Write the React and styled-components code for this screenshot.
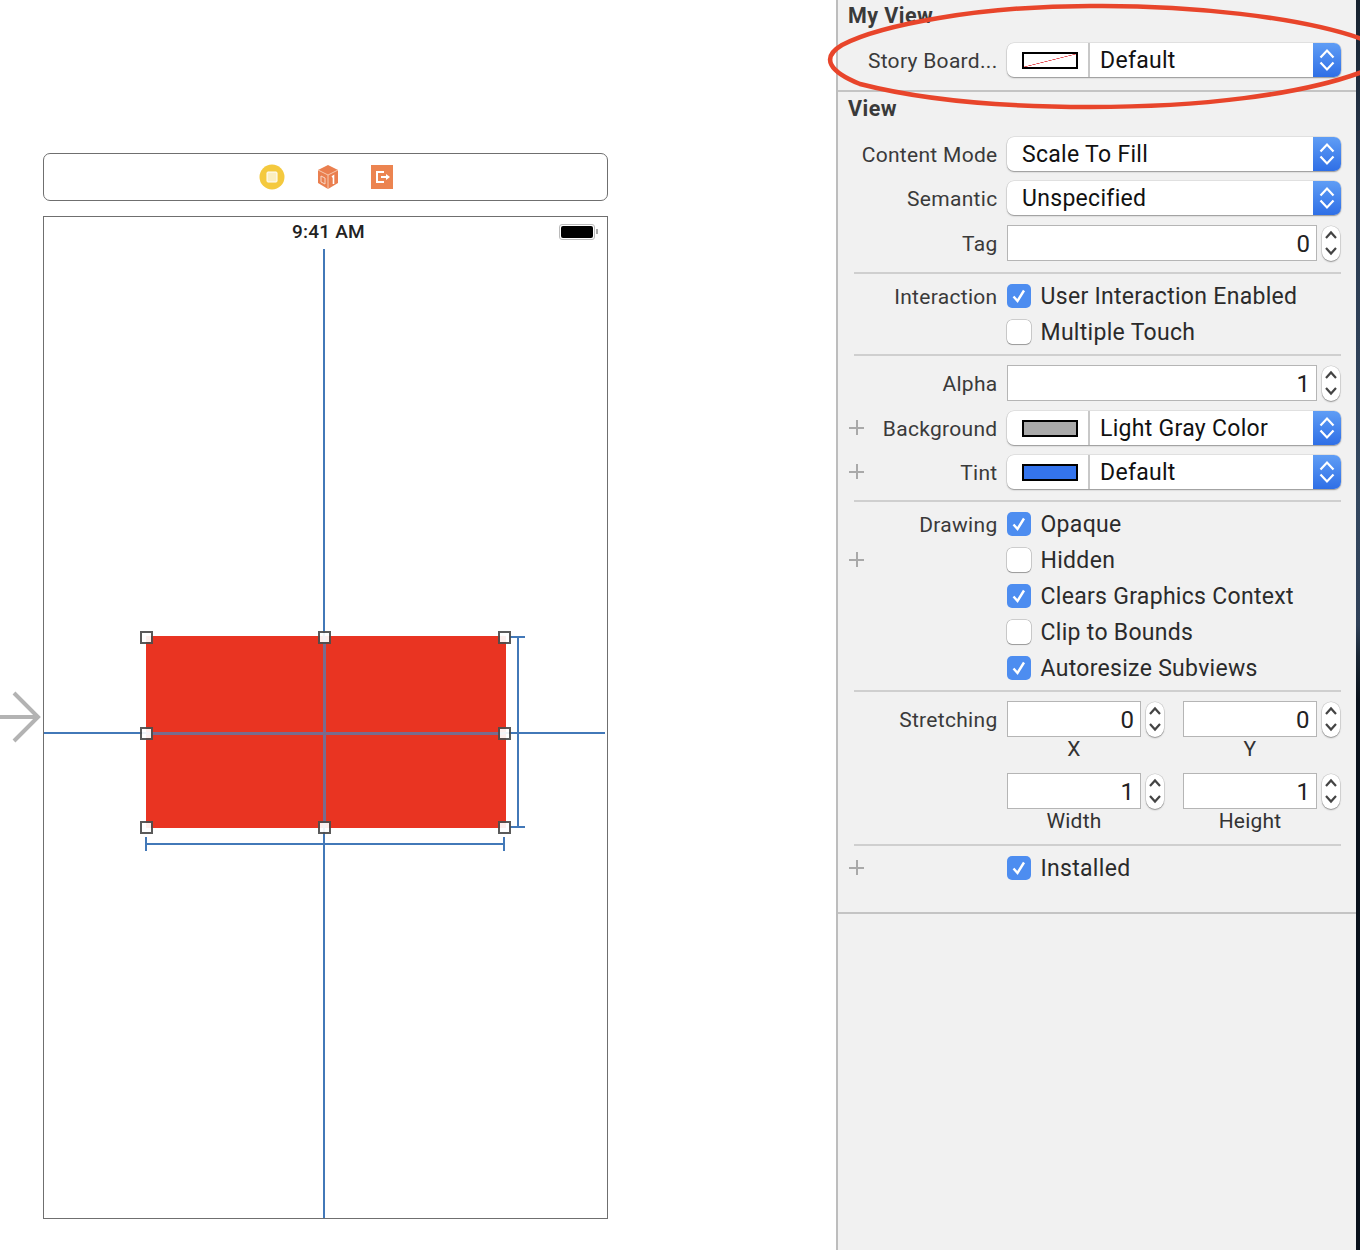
import React from "react";
import styled, { createGlobalStyle } from "styled-components";

const GlobalStyle = createGlobalStyle`
  html, body { margin: 0; padding: 0; background: #fff; }
  body { font-family: Roboto, "Liberation Sans", sans-serif; }
`;

const Page = styled.div`
  position: relative;
  width: 1360px;
  height: 1250px;
  display: flex;
  overflow: hidden;
  background: #fff;
`;

/* ---------- storyboard side ---------- */

const Canvas = styled.div`
  position: relative;
  width: 836px;
  flex: none;
  box-sizing: border-box;
  padding: 153px 228px 0 43px;
  display: flex;
  flex-direction: column;
  gap: 15px;
`;

const SceneDock = styled.div`
  height: 48px;
  box-sizing: border-box;
  border: 1.5px solid #6f6f6f;
  border-radius: 7px;
  display: flex;
  align-items: center;
  justify-content: center;
  gap: 32px;
`;

const Device = styled.div`
  position: relative;
  height: 1003px;
  box-sizing: border-box;
  border: 1.5px solid #6f6f6f;
`;

const Clock = styled.div`
  position: absolute;
  top: 4px;
  left: 248px;
  font-size: 19px;
  line-height: 22px;
  font-weight: 500;
  letter-spacing: 0.2px;
  color: #222;
`;

const Battery = styled.div`
  position: absolute;
  top: 7px;
  left: 515px;
  width: 36px;
  height: 16px;
  box-sizing: border-box;
  border: 1.5px solid #bbb;
  border-radius: 3px;
  padding: 1px;
  &::before {
    content: "";
    display: block;
    height: 100%;
    background: #000;
    border-radius: 2px;
  }
  &::after {
    content: "";
    position: absolute;
    right: -4px;
    top: 4px;
    width: 2px;
    height: 5px;
    background: #aaa;
  }
`;

const RedView = styled.div`
  position: absolute;
  left: 102px;
  top: 419px;
  width: 360px;
  height: 192px;
  background: #e93422;
`;

const Guide = styled.div`
  position: absolute;
  background: ${(p) => p.$color || "#4278b8"};
`;

const Handle = styled.div`
  position: absolute;
  width: 13px;
  height: 13px;
  box-sizing: border-box;
  border: 2px solid #4d4d4d;
  background: #fff;
  opacity: 0.92;
`;

const EntryArrow = styled.svg`
  position: absolute;
  left: 0;
  top: 690px;
`;

/* ---------- inspector ---------- */

const Inspector = styled.div`
  width: 520px;
  flex: none;
  box-sizing: border-box;
  background: #f1f1f1;
  border-left: 2.5px solid #bdbdbd;
`;

const Content = styled.div`
  height: 914px;
  box-sizing: border-box;
  border-bottom: 2px solid #c4c4c4;
`;

const SectionTitle = styled.div`
  height: ${(p) => p.$h}px;
  padding: ${(p) => p.$pt}px 0 0 10px;
  box-sizing: border-box;
  font-size: 21.5px;
  line-height: 24px;
  font-weight: 700;
  letter-spacing: 0.45px;
  color: #3a3a3a;
`;

const Section = styled.div`
  height: ${(p) => p.$h}px;
  box-sizing: border-box;
  padding-top: ${(p) => p.$pt || 0}px;
  border-bottom: ${(p) => (p.$full ? "2px solid #c4c4c4" : "none")};
`;

const Divider = styled.div`
  height: 2px;
  margin: ${(p) => p.$mt || 0}px 15px 0 16px;
  background: #cfcfcf;
`;

const Row = styled.div`
  display: flex;
  align-items: center;
  height: ${(p) => p.$h || 36}px;
  margin-top: ${(p) => p.$mt || 0}px;
  position: relative;
`;

const Plus = styled.span`
  position: absolute;
  left: 11px;
  top: 50%;
  margin-top: -8px;
  width: 15px;
  height: 15px;
  background:
    linear-gradient(#a9a9a9, #a9a9a9) center / 15px 2px no-repeat,
    linear-gradient(#a9a9a9, #a9a9a9) center / 2px 15px no-repeat;
`;

const Label = styled.div`
  width: 159.5px;
  flex: none;
  box-sizing: border-box;
  padding-top: 2px;
  text-align: right;
  font-size: 21px;
  letter-spacing: 0.3px;
  color: #3a3a3a;
  white-space: nowrap;
`;

const Controls = styled.div`
  margin-left: 9.5px;
  display: flex;
  align-items: center;
  gap: 5px;
`;

const PopUp = styled.div`
  width: 333.5px;
  height: 34px;
  box-sizing: border-box;
  background: #fff;
  border-radius: 7px;
  box-shadow: 0 1px 1.5px rgba(0, 0, 0, 0.35), 0 0 0 0.5px rgba(0, 0, 0, 0.12);
  display: flex;
  overflow: hidden;
`;

const WellCell = styled.div`
  width: 83px;
  flex: none;
  box-sizing: border-box;
  padding-left: 4px;
  border-right: 2px solid #c8c8c8;
  display: flex;
  align-items: center;
  justify-content: center;
`;

const Swatch = styled.div`
  width: 56px;
  height: 17px;
  box-sizing: border-box;
  border: 2px solid #000;
  background: ${(p) => p.$color};
`;

const PopText = styled.div`
  flex: 1;
  padding-left: ${(p) => p.$pl}px;
  font-size: 23px;
  line-height: 36px;
  letter-spacing: 0.3px;
  color: #111;
  white-space: nowrap;
`;

const PopArrows = styled.div`
  width: 28px;
  flex: none;
  background: linear-gradient(#5f9df5, #2f6fe6);
  display: flex;
  align-items: center;
  justify-content: center;
`;

const NumberField = styled.div`
  width: ${(p) => p.$w}px;
  height: 36px;
  box-sizing: border-box;
  background: #fff;
  border: 1.5px solid #b5b5b5;
  text-align: right;
  padding-right: 6px;
  font-size: 24px;
  line-height: 37px;
  color: #222;
`;

const StepperBox = styled.div`
  width: 18px;
  height: 35px;
  flex: none;
  background: #fff;
  border-radius: 9px;
  box-shadow: 0 1px 1.5px rgba(0, 0, 0, 0.35), 0 0 0 0.5px rgba(0, 0, 0, 0.15);
  display: flex;
  align-items: center;
  justify-content: center;
`;

const CheckRow = styled.div`
  display: flex;
  align-items: center;
  gap: 10px;
  margin-left: -0.5px;
  font-size: 23px;
  letter-spacing: 0.3px;
  color: #2b2b2b;
  white-space: nowrap;
`;

const Box = styled.div`
  width: 24px;
  height: 24px;
  flex: none;
  box-sizing: border-box;
  border-radius: 5px;
  background: ${(p) => (p.$on ? "#4d8df0" : "#fff")};
  box-shadow: ${(p) =>
    p.$on ? "none" : "0 0 0 0.5px rgba(0,0,0,0.3), 0 1px 1px rgba(0,0,0,0.25)"};
  display: flex;
  align-items: center;
  justify-content: center;
`;

const PairGrid = styled.div`
  margin-left: 169px;
  margin-top: ${(p) => p.$mt || 0}px;
  display: grid;
  grid-template-columns: 158px 158px;
  column-gap: 18px;
`;

const FieldCaption = styled.div`
  width: 134px;
  text-align: center;
  font-size: 21px;
  line-height: 24px;
  letter-spacing: 0.2px;
  color: #333;
`;

const Pair = styled.div`
  display: flex;
  align-items: center;
  gap: 5px;
  margin-left: ${(p) => p.$ml || 0}px;
`;

const Annotation = styled.svg`
  position: absolute;
  left: 0;
  top: 0;
  pointer-events: none;
`;

const EdgeStrip = styled.div`
  width: 4px;
  flex: none;
  background: linear-gradient(
    #17222f 0%,
    #2a3a50 15%,
    #33475f 40%,
    #2f4058 50%,
    #1a2735 52.5%,
    #0a121c 56%,
    #0a121c 100%
  );
`;

const PopChevrons = () => (
  <svg width="16" height="26" viewBox="0 0 16 26" fill="none" stroke="#fff" strokeWidth="2.2">
    <path d="M1.5 10.5 L8 3.5 L14.5 10.5" />
    <path d="M1.5 15.5 L8 22.5 L14.5 15.5" />
  </svg>
);

const StepChevrons = () => (
  <svg width="12" height="30" viewBox="0 0 12 30" fill="none" stroke="#444" strokeWidth="2.2">
    <path d="M1 10 L6 4.5 L11 10" />
    <path d="M1 20 L6 25.5 L11 20" />
  </svg>
);

const Check = () => (
  <svg width="16" height="16" viewBox="0 0 16 16" fill="none" stroke="#fff" strokeWidth="2.4">
    <path d="M2.5 8.5 L6.5 13 L13 2.5" />
  </svg>
);

const Select = ({ swatch, children }) => (
  <PopUp>
    {swatch && <WellCell>{swatch}</WellCell>}
    <PopText $pl={swatch ? 10 : 15}>{children}</PopText>
    <PopArrows>
      <PopChevrons />
    </PopArrows>
  </PopUp>
);

const Stepper = () => (
  <StepperBox>
    <StepChevrons />
  </StepperBox>
);

const Checkbox = ({ on, children }) => (
  <CheckRow>
    <Box $on={on}>{on && <Check />}</Box>
    <span>{children}</span>
  </CheckRow>
);

const handles = [
  [146, 637], [324, 637], [504, 637],
  [146, 733], [504, 733],
  [146, 827], [324, 827], [504, 827],
];

export default function App() {
  return (
    <Page>
      <GlobalStyle />
      <Canvas>
        <SceneDock>
          <svg width="26" height="26" viewBox="0 0 26 26">
            <circle cx="13" cy="13" r="12.5" fill="#f4c93e" />
            <rect x="8" y="8" width="10" height="10" rx="1" fill="#fbeec0" stroke="#fff" />
          </svg>
          <svg width="22" height="26" viewBox="0 0 22 26">
            <path d="M11 1 L21 6 V19 L11 25 L1 19 V6 Z" fill="#ea7f4f" />
            <path d="M1 6 L11 11 L21 6 M11 11 V25" stroke="#f7c9ae" strokeWidth="1" fill="none" />
            <path d="M4 12 L8 14 V20 L4 18 Z" fill="none" stroke="#f7d9c8" />
            <path d="M15 13 L16.5 12 V20" fill="none" stroke="#fff" strokeWidth="1.6" />
          </svg>
          <svg width="22" height="24" viewBox="0 0 22 24">
            <rect width="22" height="24" fill="#ec8450" />
            <path d="M13 7 H6 V17 H13" fill="none" stroke="#fff" strokeWidth="2" />
            <path d="M10 12 H16" stroke="#fff" strokeWidth="2" />
            <path d="M15 9 L19 12 L15 15 Z" fill="#fff" />
          </svg>
        </SceneDock>
        <Device>
          <Clock>9:41 AM</Clock>
          <Battery />
          <RedView />
          <Guide style={{ left: 279, top: 32, width: 2, height: 969 }} />
          <Guide style={{ left: 0, top: 515, width: 561, height: 2 }} />
          <Guide $color="#7a6b8e" style={{ left: 102, top: 514.5, width: 358, height: 3 }} />
          <Guide $color="#7a6b8e" style={{ left: 278.5, top: 420, width: 3, height: 190 }} />
          <Guide style={{ left: 473, top: 420, width: 2, height: 190 }} />
          <Guide style={{ left: 466, top: 419, width: 15, height: 2 }} />
          <Guide style={{ left: 466, top: 609, width: 15, height: 2 }} />
          <Guide style={{ left: 102, top: 626, width: 358, height: 2 }} />
          <Guide style={{ left: 101, top: 620, width: 2, height: 14 }} />
          <Guide style={{ left: 459, top: 620, width: 2, height: 14 }} />
        </Device>
        {handles.map(([x, y]) => (
          <Handle key={`${x}-${y}`} style={{ left: x - 6.5, top: y - 6.5 }} />
        ))}
        <EntryArrow width="42" height="54" viewBox="0 0 42 54" fill="none" stroke="#b3b3b3" strokeWidth="4">
          <path d="M0 27 H38" />
          <path d="M14 3 L38 27 L14 51" />
        </EntryArrow>
      </Canvas>

      <Inspector>
        <Content>
          <SectionTitle $h={30} $pt={4}>My View</SectionTitle>
          <Section $h={62} $full $pt={13}>
            <Row $h={34}>
              <Label>Story Board...</Label>
              <Controls>
                <Select swatch={<Swatch $color="linear-gradient(to bottom right, #fff 48%, #e4545a 49%, #e4545a 51%, #fff 52%)" />}>
                  Default
                </Select>
              </Controls>
            </Row>
          </Section>
          <SectionTitle $h={45} $pt={5}>View</SectionTitle>
          <Row $h={34}>
            <Label>Content Mode</Label>
            <Controls><Select>Scale To Fill</Select></Controls>
          </Row>
          <Row $h={34} $mt={10}>
            <Label>Semantic</Label>
            <Controls><Select>Unspecified</Select></Controls>
          </Row>
          <Row $mt={10}>
            <Label>Tag</Label>
            <Controls>
              <NumberField $w={310}>0</NumberField>
              <Stepper />
            </Controls>
          </Row>
          <Divider $mt={11} />
          <Row $mt={4}>
            <Label>Interaction</Label>
            <Controls><Checkbox on>User Interaction Enabled</Checkbox></Controls>
          </Row>
          <Row>
            <Label />
            <Controls><Checkbox>Multiple Touch</Checkbox></Controls>
          </Row>
          <Divider $mt={4} />
          <Row $mt={9}>
            <Label>Alpha</Label>
            <Controls>
              <NumberField $w={310}>1</NumberField>
              <Stepper />
            </Controls>
          </Row>
          <Row $h={34} $mt={10}>
            <Plus />
            <Label>Background</Label>
            <Controls>
              <Select swatch={<Swatch $color="#a9a9a9" />}>Light Gray Color</Select>
            </Controls>
          </Row>
          <Row $h={34} $mt={10}>
            <Plus />
            <Label>Tint</Label>
            <Controls>
              <Select swatch={<Swatch $color="#3474ec" />}>Default</Select>
            </Controls>
          </Row>
          <Divider $mt={11} />
          <Row $mt={4}>
            <Label>Drawing</Label>
            <Controls><Checkbox on>Opaque</Checkbox></Controls>
          </Row>
          <Row>
            <Plus />
            <Label />
            <Controls><Checkbox>Hidden</Checkbox></Controls>
          </Row>
          <Row>
            <Label />
            <Controls><Checkbox on>Clears Graphics Context</Checkbox></Controls>
          </Row>
          <Row>
            <Label />
            <Controls><Checkbox>Clip to Bounds</Checkbox></Controls>
          </Row>
          <Row>
            <Label />
            <Controls><Checkbox on>Autoresize Subviews</Checkbox></Controls>
          </Row>
          <Divider $mt={4} />
          <Row $mt={9}>
            <Label>Stretching</Label>
            <Controls>
              <Pair>
                <NumberField $w={134}>0</NumberField>
                <Stepper />
              </Pair>
              <Pair $ml={13.5}>
                <NumberField $w={134}>0</NumberField>
                <Stepper />
              </Pair>
            </Controls>
          </Row>
          <PairGrid>
            <FieldCaption>X</FieldCaption>
            <FieldCaption>Y</FieldCaption>
          </PairGrid>
          <PairGrid $mt={12}>
            <Pair>
              <NumberField $w={134}>1</NumberField>
              <Stepper />
            </Pair>
            <Pair>
              <NumberField $w={134}>1</NumberField>
              <Stepper />
            </Pair>
          </PairGrid>
          <PairGrid>
            <FieldCaption>Width</FieldCaption>
            <FieldCaption>Height</FieldCaption>
          </PairGrid>
          <Divider $mt={11} />
          <Row $mt={4}>
            <Plus />
            <Label />
            <Controls><Checkbox on>Installed</Checkbox></Controls>
          </Row>
        </Content>
      </Inspector>
      <EdgeStrip />

      <Annotation width="1360" height="1250" viewBox="0 0 1360 1250" fill="none">
        <path
          d="M1362 39 C1300 17 1190 5 1090 6 C980 6 880 25 842 45 C820 58 830 72 860 84 C930 102 1020 107 1090 107 C1200 107 1300 95 1362 72"
          stroke="#e8452b"
          strokeWidth="4.5"
        />
      </Annotation>
    </Page>
  );
}
